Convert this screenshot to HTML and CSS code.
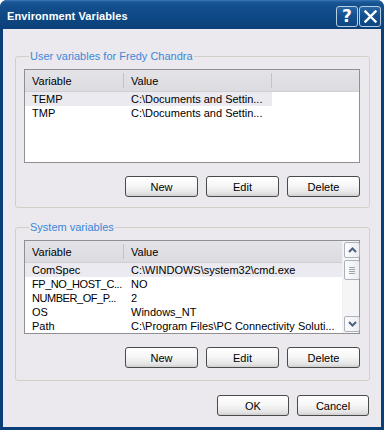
FILE: index.html
```html
<!DOCTYPE html>
<html lang="en">
<head>
  <meta charset="UTF-8" />
  <title>Environment Variables</title>
  <link rel="stylesheet" href="styles.css">
</head>
<body>
  <div class="window">
    <div class="titlebar">
      <span class="title">Environment Variables</span>
      <div class="caption-buttons">
        <div class="cap-btn help">?</div>
        <div class="cap-btn close">
          <svg width="13" height="13" viewBox="0 0 13 13"><path d="M1.5 1.5 L11.5 11.5 M11.5 1.5 L1.5 11.5" stroke="#fff" stroke-width="2.4" stroke-linecap="square"/></svg>
        </div>
      </div>
    </div>

    <div class="client">
      <!-- user variables -->
      <fieldset class="group group-user">
        <legend>User variables for Fredy Chandra</legend>
        <div class="list">
          <div class="list-main">
            <div class="list-head user-cols">
              <div class="hcell">Variable</div>
              <div class="hcell">Value</div>
              <div class="hcell"></div>
            </div>
            <div class="row user-cols selected"><span>TEMP</span><span>C:\Documents and Settin...</span></div>
            <div class="row user-cols"><span>TMP</span><span>C:\Documents and Settin...</span></div>
          </div>
        </div>
        <div class="btn-row">
          <button class="btn">New</button>
          <button class="btn">Edit</button>
          <button class="btn">Delete</button>
        </div>
      </fieldset>

      <!-- system variables -->
      <fieldset class="group group-system">
        <legend>System variables</legend>
        <div class="list">
          <div class="list-main">
            <div class="list-head sys-cols">
              <div class="hcell">Variable</div>
              <div class="hcell last">Value</div>
            </div>
            <div class="row sys-cols selected"><span>ComSpec</span><span>C:\WINDOWS\system32\cmd.exe</span></div>
            <div class="row sys-cols"><span class="tight">FP_NO_HOST_C...</span><span>NO</span></div>
            <div class="row sys-cols"><span class="tight">NUMBER_OF_P...</span><span>2</span></div>
            <div class="row sys-cols"><span>OS</span><span>Windows_NT</span></div>
            <div class="row sys-cols"><span>Path</span><span>C:\Program Files\PC Connectivity Soluti...</span></div>
          </div>
          <div class="scrollbar">
            <div class="sb-btn">
              <svg width="9" height="6" viewBox="0 0 9 6"><path d="M1 5 L4.5 1.5 L8 5" fill="none" stroke="#4d6185" stroke-width="2"/></svg>
            </div>
            <div class="sb-thumb"><span></span><span></span><span></span><span></span></div>
            <div class="sb-track"></div>
            <div class="sb-btn">
              <svg width="9" height="6" viewBox="0 0 9 6"><path d="M1 1 L4.5 4.5 L8 1" fill="none" stroke="#4d6185" stroke-width="2"/></svg>
            </div>
          </div>
        </div>
        <div class="btn-row">
          <button class="btn">New</button>
          <button class="btn">Edit</button>
          <button class="btn">Delete</button>
        </div>
      </fieldset>

      <div class="dialog-buttons">
        <button class="btn btn-dlg">OK</button>
        <button class="btn btn-dlg">Cancel</button>
      </div>
    </div>
  </div>
</body>
</html>
```

FILE: styles.css
```css
* { box-sizing: border-box; }
body {
  margin: 0;
  background: #fff;
  font-family: 'Liberation Sans', Arial, sans-serif;
  font-size: 11px;
  color: #000;
}
.window {
  width: 384px;
  height: 430px;
  display: flex;
  flex-direction: column;
  background: #0b3f78;
  border-radius: 7px 7px 0 0;
  overflow: hidden;
}
.titlebar {
  height: 29px;
  flex: none;
  display: flex;
  align-items: center;
  justify-content: space-between;
  padding: 0 3px 0 7px;
  background: linear-gradient(#3b78b6 0, #1a5796 2px, #134f8d 6px, #0e4884 60%, #0b4079 100%);
}
.title {
  color: #fff;
  font-weight: bold;
  font-size: 11px;
  padding-top: 2px;
  letter-spacing: 0.1px;
}
.caption-buttons {
  display: flex;
  gap: 1px;
  padding-top: 4px;
}
.cap-btn {
  width: 22px;
  height: 21px;
  border: 1px solid #b9cde2;
  border-radius: 3px;
  background: linear-gradient(#2a66a4, #134f8e 50%, #0f4683);
  display: flex;
  align-items: center;
  justify-content: center;
  color: #fff;
}
.cap-btn.help {
  font-family: 'DejaVu Sans', sans-serif;
  font-weight: bold;
  font-size: 17px;
  line-height: 1;
}
.client {
  flex: 1;
  margin: 0 3px 4px 3px;
  background: #ebe9ed;
  padding: 21px 11px 11px 12px;
  display: flex;
  flex-direction: column;
}
.group {
  margin: 0;
  border: 1px solid #d0cfc9;
  border-radius: 3px;
  padding: 6px 9px 10px 8px;
  min-width: 0;
}
.group-system {
  margin-top: 13px;
  padding-bottom: 12px;
}
.group legend {
  color: #3a88d9;
  padding: 0 1px;
  margin-left: 5px;
  line-height: 13px;
}
.list {
  height: 94px;
  border: 1px solid #8f8f94;
  background: #fff;
  display: flex;
}
.list-main {
  flex: 1;
  min-width: 0;
}
.list-head {
  height: 22px;
  background: linear-gradient(#e4e3e8, #dcdbe0);
  border-bottom: 1px solid #cfced3;
}
.user-cols {
  display: grid;
  grid-template-columns: 99px 148px 1fr;
}
.sys-cols {
  display: grid;
  grid-template-columns: 99px 1fr;
}
.hcell {
  display: flex;
  align-items: center;
  padding: 1px 0 0 7px;
  position: relative;
}
.hcell::after {
  content: '';
  position: absolute;
  right: 0;
  top: 3px;
  height: 15px;
  width: 1px;
  background: #c4c3c8;
}
.hcell.last::after,
.user-cols .hcell:last-child::after {
  display: none;
}
.row {
  height: 14px;
  line-height: 14px;
  white-space: nowrap;
}
.row span {
  padding-left: 7px;
  min-width: 0;
}
.row span.tight {
  letter-spacing: -0.45px;
}
.row.selected span {
  background: #ebeaf0;
}
.scrollbar {
  width: 17px;
  flex: none;
  display: flex;
  flex-direction: column;
  padding: 1px 0 1px 1px;
  background: #f5f5f7;
  border-left: 1px solid #f0f0f0;
}
.sb-btn,
.sb-thumb {
  width: 16px;
  border: 1px solid #a9b1bd;
  border-radius: 2px;
  background: linear-gradient(90deg, #fdfdfd, #ececf0);
  display: flex;
  align-items: center;
  justify-content: center;
}
.sb-btn { height: 16px; }
.sb-thumb {
  height: 20px;
  margin-top: 2px;
  flex-direction: column;
  gap: 1px;
}
.sb-thumb span {
  width: 6px;
  height: 1px;
  background: #9aa3b0;
}
.sb-track { flex: 1; }
.btn-row {
  display: flex;
  justify-content: flex-end;
  gap: 8px;
  margin-top: 13px;
}
.btn {
  width: 73px;
  height: 21px;
  padding: 0;
  font-family: inherit;
  font-size: 11px;
  color: #000;
  border: 1px solid #4a4a4a;
  border-radius: 3px;
  background: linear-gradient(#ffffff, #f7f7f7 45%, #e4e4e4 85%, #cfcfcf);
}
.btn-dlg { width: 72px; }
.dialog-buttons {
  display: flex;
  justify-content: flex-end;
  gap: 8px;
  margin-top: 14px;
  padding-right: 1px;
}
```
